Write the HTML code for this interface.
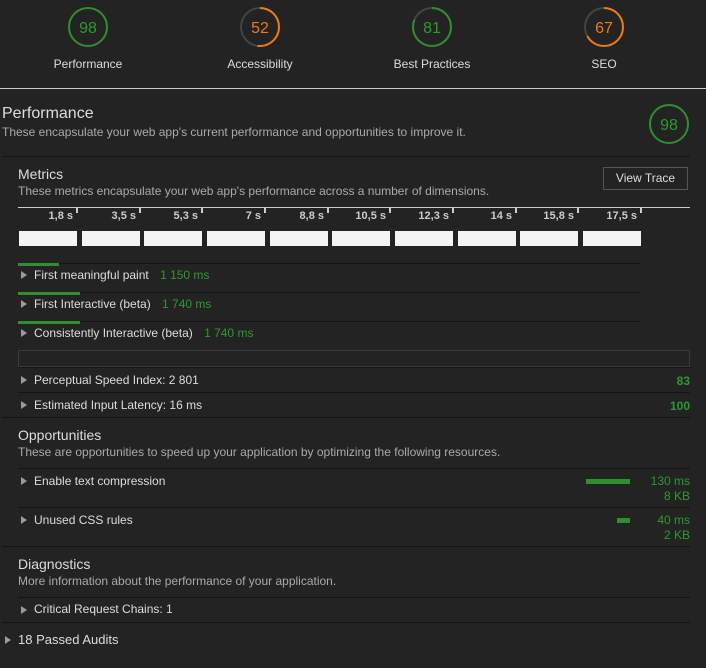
<!DOCTYPE html>
<html><head><meta charset="utf-8"><style>
*{margin:0;padding:0;box-sizing:border-box}
body{width:706px;height:668px;background:#232323;font-family:"Liberation Sans",sans-serif;color:#ddd;position:relative;overflow:hidden}
.a{position:absolute;white-space:nowrap}
.g{color:#2e9a2e}
.ln{position:absolute;height:1px;background:#141414}
.tri{position:absolute;width:0;height:0;border-left:6px solid #9a9a9a;border-top:4px solid transparent;border-bottom:4px solid transparent}
.fr{position:absolute;top:231px;width:58px;height:15px;background:#f4f4f4}
.tk{position:absolute;top:207px;width:2px;height:6px;background:#ccc}
.tl{position:absolute;top:210px;font-size:11px;font-weight:bold;color:#ccc;text-align:right;width:50px}
.gb{position:absolute;height:3px;background:#2e8f2e}
</style></head><body>
<svg class="a" style="left:0;top:0" width="706" height="80">
<g fill="none" stroke-width="2">
<circle cx="88" cy="27" r="19" stroke="#2e8f2e"/>
<circle cx="260" cy="27" r="19" stroke="#444"/>
<circle cx="260" cy="27" r="19" stroke="#f07a10" stroke-dasharray="62.1 200" transform="rotate(-90 260 27)"/>
<circle cx="432" cy="27" r="19" stroke="#444"/>
<circle cx="432" cy="27" r="19" stroke="#2e8f2e" stroke-dasharray="96.7 200" transform="rotate(-90 432 27)"/>
<circle cx="604" cy="27" r="19" stroke="#444"/>
<circle cx="604" cy="27" r="19" stroke="#f07a10" stroke-dasharray="80 200" transform="rotate(-90 604 27)"/>
</g>
<g font-family="Liberation Sans" font-size="16" text-anchor="middle">
<text x="88" y="33" fill="#2e9a2e">98</text>
<text x="260" y="33" fill="#f07a10">52</text>
<text x="432" y="33" fill="#2e9a2e">81</text>
<text x="604" y="33" fill="#f07a10">67</text>
</g>
<g font-family="Liberation Sans" font-size="12" text-anchor="middle" fill="#ddd">
<text x="88" y="68">Performance</text>
<text x="260" y="68">Accessibility</text>
<text x="432" y="68">Best Practices</text>
<text x="604" y="68">SEO</text>
</g>
</svg>
<div class="a" style="left:0;top:88px;width:706px;height:1px;background:#ccc"></div>
<div class="a" style="left:2px;top:105px;font-size:16px;color:#ddd">Performance</div>
<div class="a" style="left:2px;top:125px;font-size:12px;color:#aaa">These encapsulate your web app's current performance and opportunities to improve it.</div>
<svg class="a" style="left:648px;top:103px" width="42" height="42"><circle cx="21" cy="21" r="19" fill="none" stroke="#2e8f2e" stroke-width="2"/><text x="21" y="27" font-family="Liberation Sans" font-size="16" text-anchor="middle" fill="#2e9a2e">98</text></svg>
<div class="ln" style="left:2px;top:156px;width:688px"></div>
<div class="a" style="left:18px;top:166px;font-size:14px;color:#ddd">Metrics</div>
<div class="a" style="left:18px;top:184px;font-size:12px;color:#aaa">These metrics encapsulate your web app's performance across a number of dimensions.</div>
<div class="a" style="left:603px;top:167px;width:85px;height:23px;border:1px solid #555;font-size:12px;color:#ddd;text-align:center;line-height:21px">View Trace</div>
<div class="a" style="left:18px;top:207px;width:672px;height:1px;background:#ccc"></div>
<div class="tk" style="left:76px"></div><div class="tl" style="left:23px">1,8 s</div>
<div class="tk" style="left:139px"></div><div class="tl" style="left:86px">3,5 s</div>
<div class="tk" style="left:201px"></div><div class="tl" style="left:148px">5,3 s</div>
<div class="tk" style="left:264px"></div><div class="tl" style="left:211px">7 s</div>
<div class="tk" style="left:327px"></div><div class="tl" style="left:274px">8,8 s</div>
<div class="tk" style="left:389px"></div><div class="tl" style="left:336px">10,5 s</div>
<div class="tk" style="left:452px"></div><div class="tl" style="left:399px">12,3 s</div>
<div class="tk" style="left:515px"></div><div class="tl" style="left:462px">14 s</div>
<div class="tk" style="left:577px"></div><div class="tl" style="left:524px">15,8 s</div>
<div class="tk" style="left:640px"></div><div class="tl" style="left:587px">17,5 s</div>
<div class="fr" style="left:19px"></div><div class="fr" style="left:82px"></div><div class="fr" style="left:144px"></div><div class="fr" style="left:207px"></div><div class="fr" style="left:270px"></div><div class="fr" style="left:332px"></div><div class="fr" style="left:395px"></div><div class="fr" style="left:458px"></div><div class="fr" style="left:520px"></div><div class="fr" style="left:583px"></div>

<div class="ln" style="left:18px;top:263px;width:623px"></div><div class="gb" style="left:18px;top:263px;width:41px"></div>
<div class="tri" style="left:21px;top:271px"></div>
<div class="a" style="left:34px;top:268px;font-size:12px">First meaningful paint <span class="g" style="margin-left:8px">1 150 ms</span></div>
<div class="ln" style="left:18px;top:292px;width:623px"></div><div class="gb" style="left:18px;top:292px;width:62px"></div>
<div class="tri" style="left:21px;top:300px"></div>
<div class="a" style="left:34px;top:297px;font-size:12px">First Interactive (beta) <span class="g" style="margin-left:8px">1 740 ms</span></div>
<div class="ln" style="left:18px;top:321px;width:623px"></div><div class="gb" style="left:18px;top:321px;width:62px"></div>
<div class="tri" style="left:21px;top:329px"></div>
<div class="a" style="left:34px;top:326px;font-size:12px">Consistently Interactive (beta) <span class="g" style="margin-left:8px">1 740 ms</span></div>
<div class="a" style="left:18px;top:350px;width:672px;height:17px;border:1px solid #3a3a3a"></div>
<div class="ln" style="left:18px;top:367px;width:672px"></div>
<div class="tri" style="left:21px;top:376px"></div>
<div class="a" style="left:34px;top:373px;font-size:12px">Perceptual Speed Index: 2 801</div>
<div class="a g" style="right:16px;top:374px;font-size:12px;font-weight:bold">83</div>
<div class="ln" style="left:18px;top:392px;width:672px"></div>
<div class="tri" style="left:21px;top:401px"></div>
<div class="a" style="left:34px;top:398px;font-size:12px">Estimated Input Latency: 16 ms</div>
<div class="a g" style="right:16px;top:399px;font-size:12px;font-weight:bold">100</div>
<div class="ln" style="left:2px;top:417px;width:688px"></div>

<div class="a" style="left:18px;top:427px;font-size:14px">Opportunities</div>
<div class="a" style="left:18px;top:445px;font-size:12px;color:#aaa">These are opportunities to speed up your application by optimizing the following resources.</div>
<div class="ln" style="left:18px;top:468px;width:672px"></div>
<div class="tri" style="left:21px;top:477px"></div>
<div class="a" style="left:34px;top:474px;font-size:12px">Enable text compression</div>
<div class="a" style="left:586px;top:479px;width:44px;height:5px;background:#2e8f2e"></div>
<div class="a g" style="right:16px;top:474px;font-size:12px">130 ms</div>
<div class="a g" style="right:16px;top:489px;font-size:12px">8 KB</div>
<div class="ln" style="left:18px;top:507px;width:672px"></div>
<div class="tri" style="left:21px;top:516px"></div>
<div class="a" style="left:34px;top:513px;font-size:12px">Unused CSS rules</div>
<div class="a" style="left:617px;top:518px;width:13px;height:5px;background:#2e8f2e"></div>
<div class="a g" style="right:16px;top:513px;font-size:12px">40 ms</div>
<div class="a g" style="right:16px;top:528px;font-size:12px">2 KB</div>
<div class="ln" style="left:2px;top:546px;width:688px"></div>

<div class="a" style="left:18px;top:556px;font-size:14px">Diagnostics</div>
<div class="a" style="left:18px;top:574px;font-size:12px;color:#aaa">More information about the performance of your application.</div>
<div class="ln" style="left:18px;top:597px;width:672px"></div>
<div class="tri" style="left:21px;top:606px"></div>
<div class="a" style="left:34px;top:602px;font-size:12px">Critical Request Chains: 1</div>
<div class="ln" style="left:2px;top:622px;width:688px"></div>
<div class="tri" style="left:5px;top:636px"></div>
<div class="a" style="left:18px;top:632px;font-size:13px">18 Passed Audits</div>
</body></html>
